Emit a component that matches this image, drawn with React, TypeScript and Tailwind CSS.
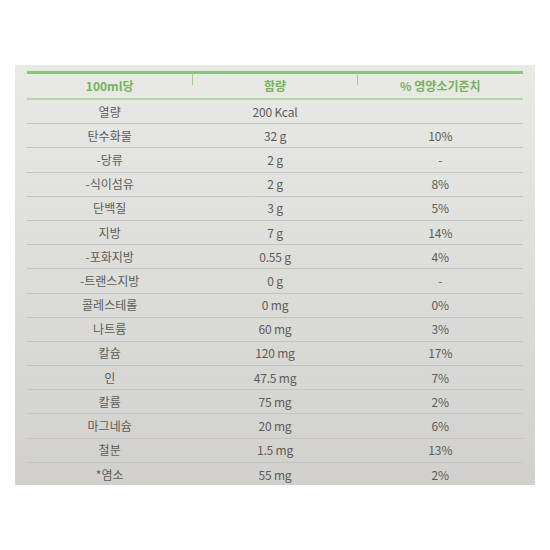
import React from 'react';

const ROWS: [string, string, string][] = [
  ['열량', '200 Kcal', ''],
  ['탄수화물', '32 g', '10%'],
  ['-당류', '2 g', '-'],
  ['-식이섬유', '2 g', '8%'],
  ['단백질', '3 g', '5%'],
  ['지방', '7 g', '14%'],
  ['-포화지방', '0.55 g', '4%'],
  ['-트랜스지방', '0 g', '-'],
  ['콜레스테롤', '0 mg', '0%'],
  ['나트륨', '60 mg', '3%'],
  ['칼슘', '120 mg', '17%'],
  ['인', '47.5 mg', '7%'],
  ['칼륨', '75 mg', '2%'],
  ['마그네슘', '20 mg', '6%'],
  ['철분', '1.5 mg', '13%'],
  ['*염소', '55 mg', '2%'],
];

export default function App() {
  return (
    <div className="w-[550px] h-[550px] bg-white pt-[65px] pl-[15px] font-['Noto_Sans_CJK_KR',sans-serif]">
      <div className="w-[520px] h-[420px] overflow-hidden bg-gradient-to-b from-[#e9eae6] to-[#d1d0cc] px-[12px] pt-[6px]">
        {/* Header */}
        <div className="relative grid grid-cols-3 h-[29px] border-t-[3px] border-b-2 border-t-[#8cc37a] border-b-[#b3d6a5] text-[12px] font-bold text-[#76b15c]">
          <span className="absolute left-[165px] top-0 w-px h-[11px] bg-[#9fcb8e]" />
          <span className="absolute left-[330px] top-0 w-px h-[11px] bg-[#9fcb8e]" />
          <div className="flex items-center justify-center">100ml당</div>
          <div className="flex items-center justify-center">함량</div>
          <div className="flex items-center justify-center">% 영양소기준치</div>
        </div>
        {ROWS.map(([name, amount, pct], i) => (
          <div
            key={name}
            className={
              'grid grid-cols-3 h-[24.2px] text-[12px] text-[#5c5c5a] leading-none ' +
              (i < ROWS.length - 1 ? 'border-b border-[#c4c4c0]' : '')
            }
          >
            <div className="flex items-center justify-center">{name}</div>
            <div className="flex items-center justify-center tracking-[-0.2px]">{amount}</div>
            <div className="flex items-center justify-center">{pct}</div>
          </div>
        ))}
      </div>
    </div>
  );
}
